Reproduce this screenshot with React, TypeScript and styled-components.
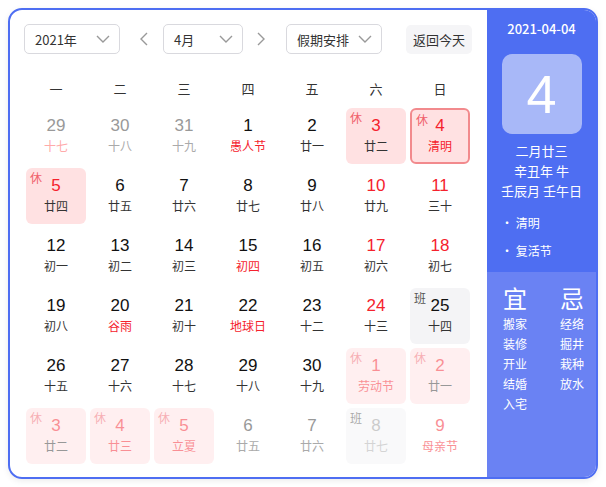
import React from 'react';
import styled, { createGlobalStyle } from 'styled-components';

const GlobalStyle = createGlobalStyle`
    body {
        margin: 0;
        background: #ffffff;
        font-family: "Noto Sans CJK SC", "Noto Sans", sans-serif;
    }
`;

const Page = styled.div`
    padding: 8px;
`;

const Wrapper = styled.div`
    width: 590px;
    height: 471px;
    box-sizing: border-box;
    border: 2px solid #4e6ef2;
    border-radius: 14px;
    display: flex;
    overflow: hidden;
    box-shadow: 0 2px 6px rgba(0, 0, 0, 0.08);
`;

const Main = styled.div`
    flex: 1;
    padding: 14px 15px 0 14px;
`;

const Toolbar = styled.div`
    display: flex;
    align-items: center;
    height: 30px;
`;

const Select = styled.div<{ $w: number; $ml?: number }>`
    width: ${(p) => p.$w}px;
    height: 30px;
    box-sizing: border-box;
    margin-left: ${(p) => p.$ml || 0}px;
    border: 1px solid #d9d9de;
    border-radius: 5px;
    display: flex;
    align-items: center;
    justify-content: space-between;
    padding: 0 8px 0 10px;
    font-size: 13px;
    color: #333;
`;

const Arrow = styled.div<{ $ml: number }>`
    margin-left: ${(p) => p.$ml}px;
    width: 12px;
    display: flex;
    align-items: center;
`;

const TodayButton = styled.div`
    margin-left: auto;
    height: 29px;
    padding: 0 7px;
    border-radius: 5px;
    background: #f5f5f7;
    display: flex;
    align-items: center;
    font-size: 13px;
    color: #333;
`;

const WeekHeader = styled.div`
    display: grid;
    grid-template-columns: repeat(7, 60px);
    column-gap: 4px;
    margin: 22px 0 0 2px;
    height: 24px;
    align-items: center;
`;

const WeekDay = styled.div`
    text-align: center;
    font-size: 13px;
    color: #333;
`;

const Grid = styled.div`
    display: grid;
    grid-template-columns: repeat(7, 60px);
    grid-auto-rows: 56px;
    gap: 4px;
    margin: 8px 0 0 2px;
`;

type Kind = 'normal' | 'rest' | 'work';

const Cell = styled.div<{ $kind: Kind; $faded: boolean; $selected: boolean }>`
    position: relative;
    box-sizing: border-box;
    border-radius: 6px;
    display: flex;
    flex-direction: column;
    align-items: center;
    padding-top: ${(p) => (p.$selected ? 6 : 8)}px;
    background: ${(p) =>
        p.$kind === 'rest' ? '#ffe1e2' : p.$kind === 'work' ? '#f4f4f6' : 'transparent'};
    border: ${(p) => (p.$selected ? '2px solid #f28a8d' : 'none')};
    opacity: ${(p) => (p.$faded ? 0.5 : 1)};
`;

const Tag = styled.span<{ $kind: Kind }>`
    position: absolute;
    left: 4px;
    top: 1px;
    font-size: 12px;
    color: ${(p) => (p.$kind === 'rest' ? '#f0606a' : '#555')};
`;

const DayNum = styled.div<{ $color: string }>`
    font-family: "Liberation Sans", Arial, sans-serif;
    font-size: 17px;
    line-height: 20px;
    color: ${(p) => p.$color};
`;

const Lunar = styled.div<{ $color: string }>`
    font-size: 12px;
    line-height: 18px;
    margin-top: 1px;
    color: ${(p) => p.$color};
`;

const Side = styled.div`
    width: 109px;
    display: flex;
    flex-direction: column;
    color: #fff;
`;

const SideTop = styled.div`
    background: #4e6ef2;
    height: 262px;
    display: flex;
    flex-direction: column;
    align-items: center;
    padding-top: 10px;
    box-sizing: border-box;
`;

const DateText = styled.div`
    font-size: 13px;
    font-weight: 500;
    line-height: 18px;
`;

const BigDay = styled.div`
    margin-top: 16px;
    width: 80px;
    height: 80px;
    border-radius: 10px;
    background: #a8b8f8;
    display: flex;
    align-items: center;
    justify-content: center;
    font-family: "Liberation Sans", Arial, sans-serif;
    font-size: 54px;
`;

const LunarInfo = styled.div`
    margin-top: 7px;
    font-size: 13px;
    line-height: 20px;
    text-align: center;
`;

const FestList = styled.div`
    align-self: stretch;
    padding: 13px 0 0 14px;
    font-size: 12px;
    display: flex;
    flex-direction: column;
    gap: 11px;
`;

const SideBottom = styled.div`
    flex: 1;
    background: #6a82f3;
    display: grid;
    grid-template-columns: 57px 1fr;
    padding: 12px 0 0 16px;
`;

const LuckCol = styled.div`
    display: flex;
    flex-direction: column;
`;

const LuckTitle = styled.div`
    font-size: 24px;
    line-height: 28px;
    margin-bottom: 2px;
`;

const LuckItem = styled.div`
    font-size: 12px;
    line-height: 20px;
`;

const Chevron = ({ color = '#999' }: { color?: string }) => (
    <svg width="16" height="10" viewBox="0 0 16 10">
        <path d="M2 2 L8 8 L14 2" fill="none" stroke={color} strokeWidth="1.4" />
    </svg>
);

const Side2 = ({ dir }: { dir: 'l' | 'r' }) => (
    <svg width="10" height="16" viewBox="0 0 10 16">
        <path d={dir === 'l' ? 'M8 2 L2 8 L8 14' : 'M2 2 L8 8 L2 14'} fill="none" stroke="#999" strokeWidth="1.4" />
    </svg>
);

type Day = {
    n: number;
    l: string;
    kind?: Kind;
    red?: boolean;
    lred?: boolean;
    gray?: boolean;
    faded?: boolean;
    sel?: boolean;
};

const RED = '#f5222d';

const days: Day[] = [
    { n: 29, l: '十七', gray: true, lred: true },
    { n: 30, l: '十八', gray: true },
    { n: 31, l: '十九', gray: true },
    { n: 1, l: '愚人节', lred: true },
    { n: 2, l: '廿一' },
    { n: 3, l: '廿二', kind: 'rest', red: true },
    { n: 4, l: '清明', kind: 'rest', red: true, lred: true, sel: true },
    { n: 5, l: '廿四', kind: 'rest', red: true },
    { n: 6, l: '廿五' },
    { n: 7, l: '廿六' },
    { n: 8, l: '廿七' },
    { n: 9, l: '廿八' },
    { n: 10, l: '廿九', red: true },
    { n: 11, l: '三十', red: true },
    { n: 12, l: '初一' },
    { n: 13, l: '初二' },
    { n: 14, l: '初三' },
    { n: 15, l: '初四', lred: true },
    { n: 16, l: '初五' },
    { n: 17, l: '初六', red: true },
    { n: 18, l: '初七', red: true },
    { n: 19, l: '初八' },
    { n: 20, l: '谷雨', lred: true },
    { n: 21, l: '初十' },
    { n: 22, l: '地球日', lred: true },
    { n: 23, l: '十二' },
    { n: 24, l: '十三', red: true },
    { n: 25, l: '十四', kind: 'work' },
    { n: 26, l: '十五' },
    { n: 27, l: '十六' },
    { n: 28, l: '十七' },
    { n: 29, l: '十八' },
    { n: 30, l: '十九' },
    { n: 1, l: '劳动节', kind: 'rest', red: true, lred: true, faded: true },
    { n: 2, l: '廿一', kind: 'rest', red: true, faded: true },
    { n: 3, l: '廿二', kind: 'rest', red: true, faded: true },
    { n: 4, l: '廿三', kind: 'rest', red: true, lred: true, faded: true },
    { n: 5, l: '立夏', kind: 'rest', red: true, lred: true, faded: true },
    { n: 6, l: '廿五', gray: true },
    { n: 7, l: '廿六', gray: true },
    { n: 8, l: '廿七', kind: 'work', gray: true, faded: true },
    { n: 9, l: '母亲节', red: true, lred: true, faded: true },
];

const weekDays = ['一', '二', '三', '四', '五', '六', '日'];

function App() {
    const cells = days.map((d, i) => {
        const kind: Kind = d.kind || 'normal';
        const numColor = d.red ? RED : d.gray ? '#999' : '#111';
        let lunarColor = d.lred ? RED : d.gray ? '#aaa' : '#333';
        if (d.gray && d.lred) lunarColor = '#ffaaaa';
        return (
            <Cell key={i} $kind={kind} $faded={!!d.faded} $selected={!!d.sel}>
                {kind !== 'normal' && <Tag $kind={kind}>{kind === 'rest' ? '休' : '班'}</Tag>}
                <DayNum $color={numColor}>{d.n}</DayNum>
                <Lunar $color={lunarColor}>{d.l}</Lunar>
            </Cell>
        );
    });

    return (
        <Page>
            <GlobalStyle />
            <Wrapper>
                <Main>
                    <Toolbar>
                        <Select $w={96}>2021年<Chevron /></Select>
                        <Arrow $ml={19}><Side2 dir="l" /></Arrow>
                        <Select $w={80} $ml={12}>4月<Chevron /></Select>
                        <Arrow $ml={13}><Side2 dir="r" /></Arrow>
                        <Select $w={96} $ml={18}>假期安排<Chevron /></Select>
                        <TodayButton>返回今天</TodayButton>
                    </Toolbar>
                    <WeekHeader>
                        {weekDays.map((w) => (
                            <WeekDay key={w}>{w}</WeekDay>
                        ))}
                    </WeekHeader>
                    <Grid>{cells}</Grid>
                </Main>
                <Side>
                    <SideTop>
                        <DateText>2021-04-04</DateText>
                        <BigDay>4</BigDay>
                        <LunarInfo>
                            <div>二月廿三</div>
                            <div>辛丑年 牛</div>
                            <div>壬辰月 壬午日</div>
                        </LunarInfo>
                        <FestList>
                            <div>• 清明</div>
                            <div>• 复活节</div>
                        </FestList>
                    </SideTop>
                    <SideBottom>
                        <LuckCol>
                            <LuckTitle>宜</LuckTitle>
                            {['搬家', '装修', '开业', '结婚', '入宅'].map((t) => (
                                <LuckItem key={t}>{t}</LuckItem>
                            ))}
                        </LuckCol>
                        <LuckCol>
                            <LuckTitle>忌</LuckTitle>
                            {['经络', '掘井', '栽种', '放水'].map((t) => (
                                <LuckItem key={t}>{t}</LuckItem>
                            ))}
                        </LuckCol>
                    </SideBottom>
                </Side>
            </Wrapper>
        </Page>
    );
}

export default App;
